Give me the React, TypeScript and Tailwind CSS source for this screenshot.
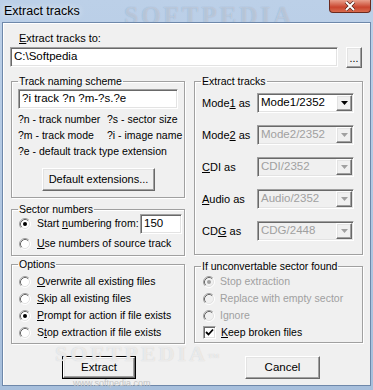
import React from 'react';

const sunken =
  'border border-t-[#a0a0a0] border-l-[#a0a0a0] border-b-white border-r-white shadow-[inset_1px_1px_0_#696969,inset_-1px_-1px_0_#e3e3e3]';
const raised =
  'border border-t-white border-l-white border-b-[#696969] border-r-[#696969] shadow-[inset_-1px_-1px_0_#a0a0a0,inset_1px_1px_0_#e3e3e3] bg-[#f0f0f0]';

const Radio: React.FC<{ checked?: boolean; disabled?: boolean }> = ({ checked, disabled }) => (
  <svg width="12" height="12" viewBox="0 0 12 12" className="shrink-0">
    <circle cx="6" cy="6" r="5" fill={disabled ? '#f0f0f0' : '#ffffff'} />
    <path d="M2.11 9.89 A5.5 5.5 0 0 1 9.89 2.11" fill="none" stroke="#a0a0a0" />
    <path d="M9.89 2.11 A5.5 5.5 0 0 1 2.11 9.89" fill="none" stroke="#ffffff" />
    <path d="M2.82 9.18 A4.5 4.5 0 0 1 9.18 2.82" fill="none" stroke="#696969" />
    <path d="M9.18 2.82 A4.5 4.5 0 0 1 2.82 9.18" fill="none" stroke="#e3e3e3" />
    {checked && <circle cx="6" cy="6" r="2" fill={disabled ? '#a0a0a0' : '#000000'} />}
  </svg>
);

const Check: React.FC = () => (
  <div className={`w-[13px] h-[13px] bg-white shrink-0 flex items-center justify-center ${sunken}`}>
    <svg width="9" height="9" viewBox="0 0 9 9">
      <polyline points="1,4 3.5,6.5 8,1.5" fill="none" stroke="#000" strokeWidth="1.8" />
    </svg>
  </div>
);

const Group: React.FC<{ title: string; className: string; children: React.ReactNode }> = ({ title, className, children }) => (
  <fieldset className={`border border-[#a0a0a0] shadow-[inset_1px_1px_0_#fff,1px_1px_0_#fff] m-0 p-0 min-w-0 ${className}`}>
    <legend className="ml-[6px] px-[1px] leading-[13px]">{title}</legend>
    {children}
  </fieldset>
);

const Select: React.FC<{ value: string; disabled?: boolean }> = ({ value, disabled }) => (
  <div className={`w-[97px] h-[20px] flex items-center ${sunken} ${disabled ? 'bg-[#f0f0f0] text-[#a0a0a0]' : 'bg-white'}`}>
    <span className="flex-1 pl-[3px] text-[11.5px]">{value}</span>
    <div className={`w-[16px] h-[16px] mr-[1px] flex items-center justify-center ${raised}`}>
      <svg width="7" height="4" viewBox="0 0 7 4">
        <polygon points="0,0 7,0 3.5,4" fill={disabled ? '#a0a0a0' : '#000'} />
      </svg>
    </div>
  </div>
);

const modes: { label: React.ReactNode; value: string; disabled?: boolean }[] = [
  { label: <>Mode<u>1</u> as</>, value: 'Mode1/2352' },
  { label: <>Mode<u>2</u> as</>, value: 'Mode2/2352', disabled: true },
  { label: <><u>C</u>DI as</>, value: 'CDI/2352', disabled: true },
  { label: <><u>A</u>udio as</>, value: 'Audio/2352', disabled: true },
  { label: <>CD<u>G</u> as</>, value: 'CDG/2448', disabled: true },
];

const options: { label: React.ReactNode; checked?: boolean }[] = [
  { label: <><u>O</u>verwrite all existing files</> },
  { label: <><u>S</u>kip all existing files</> },
  { label: <><u>P</u>rompt for action if file exists</>, checked: true },
  { label: <>S<u>t</u>op extraction if file exists</> },
];

export default function App() {
  return (
    <div className="w-[373px] h-[390px] relative overflow-hidden flex flex-col bg-[linear-gradient(#bcd0e8,#a7bfdc)] font-['Liberation_Sans',Arial,sans-serif] text-[10.5px] text-black whitespace-nowrap">
      {/* title bar */}
      <div className="h-[22px] shrink-0 relative flex items-center pl-[4px]">
        <span className="absolute left-[124px] top-[-3px] font-['Liberation_Serif',serif] font-bold text-[25px] tracking-[3px] text-white/35 [text-shadow:0_0_1px_#8fa6c4]">
          SOFTPEDIA
        </span>
        <span className="relative text-[12.5px] [text-shadow:0_0_6px_#ffffff]">Extract tracks</span>
        <div className="absolute right-[2px] top-0 w-[42px] h-[13px] rounded-b-[4px] border border-t-0 border-[#6b2a1e] bg-[linear-gradient(#e9a08c,#c9452e_60%,#d86a4d)] flex items-center justify-center">
          <svg width="12" height="10" viewBox="0 0 12 10">
            <path d="M2 1 L10 9 M10 1 L2 9" stroke="#4a1c14" strokeWidth="3.2" />
            <path d="M2 1 L10 9 M10 1 L2 9" stroke="#ffffff" strokeWidth="2" />
          </svg>
        </div>
      </div>

      {/* client area */}
      <div className="ml-[2px] mr-[2px] mb-[4px] flex-1 bg-[#f0f0f0] border border-[#6e88aa] shadow-[inset_1px_1px_0_#fff] flex flex-col relative">
        <div className="mt-[9px] ml-[16px] h-[13px] leading-[13px] text-[11px]">
          <u>E</u>xtract tracks to:
        </div>
        <div className="mt-[2px] ml-[7px] flex">
          <div className={`w-[328px] h-[20px] bg-white flex items-center pl-[3px] text-[11.5px] ${sunken}`}>C:\Softpedia</div>
          <div className={`ml-[8px] w-[16px] h-[21px] flex items-end justify-center pb-[4px] leading-none ${raised}`}>...</div>
        </div>

        <div className="mt-[7px] ml-[8px] flex gap-[9px]">
          {/* left column */}
          <div className="w-[174px] flex flex-col">
            <Group title="Track naming scheme" className="h-[123px]">
              <div className="pl-[6px] flex flex-col">
                <div className={`mt-[1px] w-[160px] h-[20px] bg-white flex items-center pl-[3px] text-[11.5px] ${sunken}`}>?i track ?n ?m-?s.?e</div>
                <div className="mt-[2px] grid grid-cols-[89px_1fr] leading-[16px]">
                  <span>?n - track number</span>
                  <span>?s - sector size</span>
                  <span>?m - track mode</span>
                  <span>?i - image name</span>
                  <span className="col-span-2">?e - default track type extension</span>
                </div>
                <div className={`mt-[9px] ml-[24px] w-[113px] h-[23px] flex items-center justify-center text-[11px] ${raised}`}>
                  Default extensions...
                </div>
              </div>
            </Group>

            <Group title="Sector numbers" className="mt-[5px] h-[53px]">
              <div className="flex flex-col pl-[7px]">
                <div className="mt-[-2px] h-[20px] flex items-center">
                  <Radio checked />
                  <span className="ml-[6px]">
                    Start <u>n</u>umbering from:
                  </span>
                  <div className={`ml-auto mr-[2px] w-[42px] h-[20px] bg-white flex items-center pl-[3px] text-[11.5px] ${sunken}`}>150</div>
                </div>
                <div className="mt-[2px] h-[16px] flex items-center">
                  <Radio />
                  <span className="ml-[6px]">
                    <u>U</u>se numbers of source track
                  </span>
                </div>
              </div>
            </Group>

            <Group title="Options" className="mt-[2px] h-[86px]">
              <div className="mt-[2px] flex flex-col pl-[7px]">
                {options.map((o, i) => (
                  <div key={i} className="h-[17px] flex items-center">
                    <Radio checked={o.checked} />
                    <span className="ml-[6px]">{o.label}</span>
                  </div>
                ))}
              </div>
            </Group>
          </div>

          {/* right column */}
          <div className="w-[169px] flex flex-col">
            <Group title="Extract tracks" className="h-[180px]">
              <div className="mt-[5px] pl-[7px] flex flex-col gap-[12px]">
                {modes.map((m, i) => (
                  <div key={i} className="flex items-center text-[11px]">
                    <span className="w-[55px]">{m.label}</span>
                    <Select value={m.value} disabled={m.disabled} />
                  </div>
                ))}
              </div>
            </Group>

            <Group title="If unconvertable sector found" className="mt-[5px] h-[83px]">
              <div className="flex flex-col pl-[8px]">
                <div className="h-[17px] flex items-center text-[#a0a0a0]">
                  <Radio checked disabled />
                  <span className="ml-[5px]">Stop extraction</span>
                </div>
                <div className="h-[17px] flex items-center text-[#a0a0a0]">
                  <Radio disabled />
                  <span className="ml-[5px]">Replace with empty sector</span>
                </div>
                <div className="h-[17px] flex items-center text-[#a0a0a0]">
                  <Radio disabled />
                  <span className="ml-[5px]">Ignore</span>
                </div>
                <div className="h-[17px] flex items-center">
                  <Check />
                  <span className="ml-[5px]">
                    <u>K</u>eep broken files
                  </span>
                </div>
              </div>
            </Group>
          </div>
        </div>

        <div className="mt-[12px] flex text-[11.5px]">
          <div className="ml-[59px] border border-black">
            <div className={`w-[72px] h-[21px] flex items-center justify-center ${raised}`}>Extract</div>
          </div>
          <div className={`ml-[109px] w-[75px] h-[23px] flex items-center justify-center ${raised}`}>Cancel</div>
        </div>

        <span className="absolute left-[52px] top-[320px] leading-none font-['Liberation_Serif',serif] font-bold text-[22px] tracking-[3px] text-white/60 [text-shadow:0_0_1px_#c8c8c8] pointer-events-none">
          SOFTPEDIA<sup className="text-[7px] tracking-normal">TM</sup>
        </span>
        <span className="absolute left-[70px] top-[356px] leading-none text-[9px] text-[#c4c4c4] pointer-events-none">www.softpedia.com</span>
      </div>
    </div>
  );
}
